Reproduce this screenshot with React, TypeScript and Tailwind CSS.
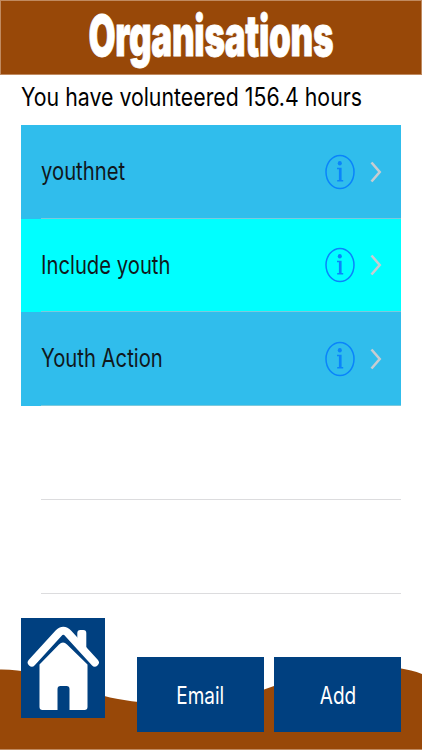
type Organisation = {
  name: string;
  selected: boolean;
};

const organisations: Organisation[] = [
  { name: "youthnet", selected: false },
  { name: "Include youth", selected: true },
  { name: "Youth Action", selected: false },
];

const totalHours = 156.4;

function InfoIcon() {
  return (
    <svg className="h-9 w-[30px] shrink-0" viewBox="0 0 30 36" fill="none">
      <ellipse cx="15" cy="18" rx="14" ry="16.6" stroke="#0a84fb" strokeWidth="1.5" />
      <ellipse cx="14.8" cy="9.2" rx="2" ry="2.2" fill="#0a84fb" />
      <path
        d="M12 13.800h4.600v12.200h1.600v1.500h-6v-1.500h1.700V15.200H12z"
        fill="#0a84fb"
      />
    </svg>
  );
}

function ChevronIcon() {
  return (
    <svg className="h-[22px] w-3 shrink-0" viewBox="0 0 12 22" fill="none">
      <path d="M1.500 1.500 9.700 11 1.500 20.500" stroke="#c7ccd1" strokeWidth="2.600" />
    </svg>
  );
}

function HomeIcon() {
  return (
    <svg className="h-[100px] w-[84px]" viewBox="0 0 84 100" fill="none">
      <path
        d="M56.300 30V15q0-3 3-3h3q3 0 3 3v24z"
        fill="#fff"
      />
      <path
        d="M10.800 44.500 37.300 15.500q5-5.500 10 0L73.800 44.500"
        stroke="#fff"
        strokeWidth="8"
        strokeLinecap="round"
        strokeLinejoin="round"
      />
      <path
        d="M18.500 46.500 38 26.500q4-4 8 0L66.500 46.500V89q0 3-3 3H48.500V71q0-3-3-3h-6q-3 0-3 3v21H21.500q-3 0-3-3z"
        fill="#fff"
      />
    </svg>
  );
}

function OrganisationRow({ name, selected }: Organisation) {
  return (
    <li className={`flex h-[93.600px] pl-5 ${selected ? "bg-[#00ffff]" : "bg-[#30bdec]"}`}>
      <div className="flex flex-1 items-center border-b border-[#7cc9dc] pt-px pr-[19px]">
        <span className="flex-1 origin-left scale-x-[0.81] whitespace-nowrap text-[25px]">
          {name}
        </span>
        <InfoIcon />
        <span className="w-[15px]" />
        <ChevronIcon />
      </div>
    </li>
  );
}

function ActionButton({ label }: { label: string }) {
  return (
    <button
      type="button"
      className="flex h-[75px] w-[127px] items-center justify-center bg-[#004080] pt-[3px] text-[24px] text-white"
    >
      <span className="scale-x-[0.79]">{label}</span>
    </button>
  );
}

export default function App() {
  return (
    <main className="flex h-[750px] w-[422px] flex-col overflow-hidden bg-white font-['Inter','Liberation_Sans',sans-serif] text-[#10181c]">
      <header className="flex h-[75px] shrink-0 items-center justify-center border border-[#c08a60] bg-[#984808] pb-[3px]">
        <h1 className="origin-center scale-x-[0.625] whitespace-nowrap text-[56px] leading-none font-black tracking-[-0.500px] text-white [-webkit-text-stroke:0.800px_white]">
          Organisations
        </h1>
      </header>

      <p className="flex h-[50px] shrink-0 items-center pb-1 pl-[21px] text-[25px] whitespace-nowrap text-black">
        <span className="origin-left scale-x-[0.852]">You have volunteered {totalHours} hours</span>
      </p>

      <ul className="ml-[21px] w-[380px] shrink-0">
        {organisations.map((organisation) => (
          <OrganisationRow key={organisation.name} {...organisation} />
        ))}
      </ul>
      <div className="ml-[41px] h-[94px] w-[360px] shrink-0 border-b border-[#dcdcde]" />
      <div className="ml-[41px] h-[94px] w-[360px] shrink-0 border-b border-[#dcdcde]" />

      <footer className="relative mt-auto flex h-[132px] shrink-0 pl-[21px]">
        <svg className="absolute inset-0 h-[132px] w-[422px]" viewBox="0 0 422 132">
          <path
            d="M0 51.500C45 51 75 73 118 81C172 91 225 86 274 68C320 48 385 42 422 56V131H0z"
            fill="#984808"
          />
          <path d="M0 131.500H422" stroke="#c08a60" />
        </svg>
        <button type="button" aria-label="Home" className="relative h-[100px] w-[84px] bg-[#004080]">
          <HomeIcon />
        </button>
        <div className="relative ml-8 flex gap-[10px] pt-[39px]">
          <ActionButton label="Email" />
          <ActionButton label="Add" />
        </div>
      </footer>
    </main>
  );
}
